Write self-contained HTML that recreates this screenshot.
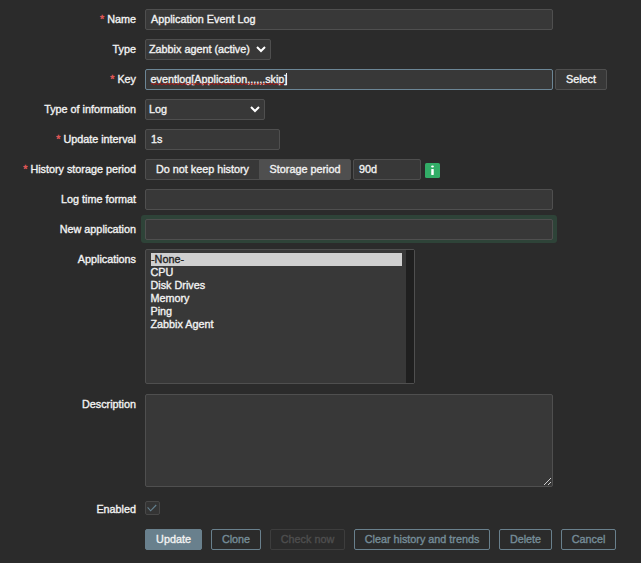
<!DOCTYPE html>
<html><head><meta charset="utf-8">
<style>
html,body{margin:0;padding:0;}
body{width:641px;height:563px;background:#2b2b2b;position:relative;overflow:hidden;font-family:"Liberation Sans",Arial,sans-serif;font-size:10.8px;color:#f2f2f2;-webkit-text-stroke-width:0.35px;}
.lbl{position:absolute;left:0;width:136px;text-align:right;height:20px;line-height:20px;white-space:nowrap;}
.req:before{content:"*";color:#e45959;margin-right:3px;}
.inp{position:absolute;box-sizing:border-box;background:#383838;border:1px solid #4f4f4f;border-radius:2px;height:21px;line-height:19px;padding:0 5px;white-space:nowrap;overflow:hidden;}
.btn{position:absolute;box-sizing:border-box;height:21px;line-height:19px;text-align:center;border:1px solid #69808d;border-radius:2px;color:#768d99;top:529px;}
</style></head><body>

<div class="lbl req" style="top:9px">Name</div>
<div class="inp" style="left:145px;top:9px;width:408px">Application Event Log</div>

<div class="lbl" style="top:39px">Type</div>
<div class="inp" style="left:145px;top:39px;width:126px;padding-left:3px">Zabbix agent (active)
<svg style="position:absolute;right:4px;top:5px" width="10" height="8" viewBox="0 0 10 8"><path d="M1 2 L5 6 L9 2" fill="none" stroke="#ffffff" stroke-width="2"/></svg></div>

<div class="lbl req" style="top:69px">Key</div>
<div class="inp" style="left:145px;top:69px;width:408px;padding-left:4.5px;border-color:#6c8696">eventlog[Application,,,,,,skip]</div>
<svg style="position:absolute;left:151px;top:82px" width="133" height="5" viewBox="0 0 133 5"><polyline points="0,2.0 1,1.4 2,2.0 3,2.6 4,2.0 5,1.4 6,2.0 7,2.6 8,2.0 9,1.4 10,2.0 11,2.6 12,2.0 13,1.4 14,2.0 15,2.6 16,2.0 17,1.4 18,2.0 19,2.6 20,2.0 21,1.4 22,2.0 23,2.6 24,2.0 25,1.4 26,2.0 27,2.6 28,2.0 29,1.4 30,2.0 31,2.6 32,2.0 33,1.4 34,2.0 35,2.6 36,2.0 37,1.4 38,2.0 39,2.6 40,2.0 41,1.4 42,2.0 43,2.6 44,2.0 45,1.4 46,2.0 47,2.6 48,2.0 49,1.4 50,2.0 51,2.6 52,2.0 53,1.4 54,2.0 55,2.6 56,2.0 57,1.4 58,2.0 59,2.6 60,2.0 61,1.4 62,2.0 63,2.6 64,2.0 65,1.4 66,2.0 67,2.6 68,2.0 69,1.4 70,2.0 71,2.6 72,2.0 73,1.4 74,2.0 75,2.6 76,2.0 77,1.4 78,2.0 79,2.6 80,2.0 81,1.4 82,2.0 83,2.6 84,2.0 85,1.4 86,2.0 87,2.6 88,2.0 89,1.4 90,2.0 91,2.6 92,2.0 93,1.4 94,2.0 95,2.6 96,2.0 97,1.4 98,2.0 99,2.6 100,2.0 101,1.4 102,2.0 103,2.6 104,2.0 105,1.4 106,2.0 107,2.6 108,2.0 109,1.4 110,2.0 111,2.6 112,2.0 113,1.4 114,2.0 115,2.6 116,2.0 117,1.4 118,2.0 119,2.6 120,2.0 121,1.4 122,2.0 123,2.6 124,2.0 125,1.4 126,2.0 127,2.6 128,2.0 129,1.4 130,2.0 131,2.6 132,2.0 133,1.4" fill="none" stroke="#c81010" stroke-width="0.8" stroke-linejoin="round"/></svg>
<div style="position:absolute;left:286px;top:73px;width:1px;height:12px;background:#f2f2f2"></div>
<div class="inp" style="left:555px;top:69px;width:52px;text-align:center;background:#383838;padding:0">Select</div>

<div class="lbl" style="top:99px">Type of information</div>
<div class="inp" style="left:145px;top:99px;width:120px;padding-left:3px">Log
<svg style="position:absolute;right:4px;top:5px" width="10" height="8" viewBox="0 0 10 8"><path d="M1 2 L5 6 L9 2" fill="none" stroke="#ffffff" stroke-width="2"/></svg></div>

<div class="lbl req" style="top:129px">Update interval</div>
<div class="inp" style="left:145px;top:129px;width:135px">1s</div>

<div class="lbl req" style="top:159px">History storage period</div>
<div class="inp" style="left:145px;top:159px;width:115px;text-align:center;background:#383838;border-radius:2px 0 0 2px;padding:0">Do not keep history</div>
<div class="inp" style="left:259px;top:159px;width:92px;text-align:center;background:#4f4f4f;border-radius:0 2px 2px 0;padding:0">Storage period</div>
<div class="inp" style="left:353px;top:159px;width:68px">90d</div>
<svg style="position:absolute;left:425px;top:163px" width="15" height="15" viewBox="0 0 15 15"><rect width="15" height="15" rx="1.6" fill="#32ad67"/><ellipse cx="7.5" cy="3.5" rx="1.4" ry="0.9" fill="#fff"/><rect x="6.25" y="6" width="2.5" height="6" rx="0.4" fill="#fff"/></svg>

<div class="lbl" style="top:189px">Log time format</div>
<div class="inp" style="left:145px;top:189px;width:408px"></div>

<div class="lbl" style="top:219px">New application</div>
<div style="position:absolute;left:141px;top:215px;width:416px;height:28px;border-radius:3px;background:#2e4338"></div>
<div class="inp" style="left:145px;top:219px;width:408px"></div>

<div class="lbl" style="top:249px">Applications</div>
<div class="inp" style="left:145px;top:249px;width:270px;height:135px;padding:0"></div>
<div style="position:absolute;left:406px;top:250px;width:8px;height:133px;background:#1f1f1f"></div>
<div style="position:absolute;left:151px;top:253px;width:251px;height:13px;background:#d0d0d0;color:#1f1f1f;line-height:13px">-None-</div>
<div style="position:absolute;left:150.5px;top:266px;line-height:13px">CPU<br>Disk Drives<br>Memory<br>Ping<br>Zabbix Agent</div>

<div class="lbl" style="top:394px">Description</div>
<div class="inp" style="left:145px;top:394px;width:408px;height:93px"></div>
<svg style="position:absolute;left:544px;top:478px" width="7" height="7" viewBox="0 0 7 7" shape-rendering="crispEdges" fill="#cfcfcf"><rect x="0" y="6" width="1" height="1"/><rect x="1" y="5" width="1" height="1"/><rect x="2" y="4" width="1" height="1"/><rect x="3" y="3" width="1" height="1"/><rect x="4" y="2" width="1" height="1"/><rect x="5" y="1" width="1" height="1"/><rect x="6" y="0" width="1" height="1"/><rect x="4" y="6" width="1" height="1"/><rect x="5" y="5" width="1" height="1"/><rect x="6" y="4" width="1" height="1"/></svg>

<div class="lbl" style="top:499px">Enabled</div>
<div style="position:absolute;left:145px;top:501px;width:15px;height:14px;box-sizing:border-box;border:1px solid #484848;background:#343434;border-radius:2px"></div><svg width="15" height="14" viewBox="0 0 15 14" style="position:absolute;left:145px;top:501px"><path d="M2.6 6.3 L5.6 9.8 L11.2 4" fill="none" stroke="#64808f" stroke-width="1.1"/></svg>

<div class="btn" style="left:145px;width:57px;background:#69808d;color:#f2f2f2">Update</div>
<div class="btn" style="left:211px;width:50px">Clone</div>
<div class="btn" style="left:270px;width:75px;border-color:#3d3d3d;color:#4e4e4e">Check now</div>
<div class="btn" style="left:354px;width:136px">Clear history and trends</div>
<div class="btn" style="left:499px;width:53px">Delete</div>
<div class="btn" style="left:561px;width:55px">Cancel</div>

</body></html>
